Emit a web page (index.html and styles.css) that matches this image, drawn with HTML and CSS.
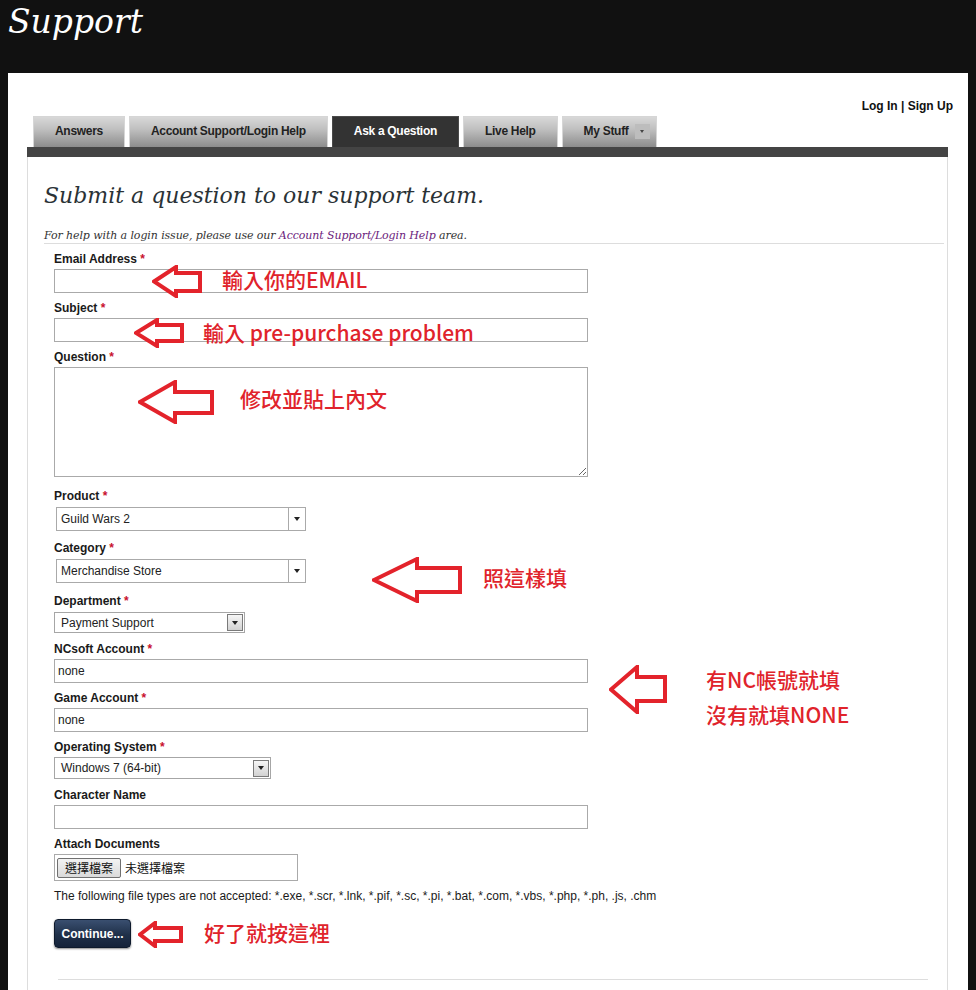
FILE: index.html
```html
<!DOCTYPE html>
<html lang="zh-Hant">
<head>
<meta charset="utf-8">
<title>Support</title>
<link rel="stylesheet" href="styles.css">
</head>
<body>
<div class="screen">
  <header class="masthead"><h1 class="brand">Support</h1></header>
  <div class="page">
    <div class="account">Log In | Sign Up</div>
    <nav class="tabs">
      <div class="tab">Answers</div>
      <div class="tab">Account Support/Login Help</div>
      <div class="tab active">Ask a Question</div>
      <div class="tab">Live Help</div>
      <div class="tab tab-menu">My Stuff <span class="menu-btn"><span class="tri"></span></span></div>
    </nav>
    <div class="bar"></div>
    <div class="panel">
      <h2 class="title">Submit a question to our support team.</h2>
      <p class="intro">For help with a login issue, please use our <a href="#">Account Support/Login Help</a> area.</p>
      <form class="form">
        <div class="group">
          <label class="label">Email Address <span class="req">*</span></label>
          <input class="text" type="text">
        </div>
        <div class="group">
          <label class="label">Subject <span class="req">*</span></label>
          <input class="text" type="text">
        </div>
        <div class="group g-area">
          <label class="label">Question <span class="req">*</span></label>
          <textarea class="text area"></textarea>
        </div>
        <div class="group g-sel">
          <label class="label">Product <span class="req">*</span></label>
          <div class="select"><span class="val">Guild Wars 2</span><span class="caret"><span class="tri"></span></span></div>
        </div>
        <div class="group g-sel2">
          <label class="label">Category <span class="req">*</span></label>
          <div class="select"><span class="val">Merchandise Store</span><span class="caret"><span class="tri"></span></span></div>
        </div>
        <div class="group g-dept">
          <label class="label">Department <span class="req">*</span></label>
          <div class="select classic dept"><span class="val">Payment Support</span><span class="btn"><span class="tri"></span></span></div>
        </div>
        <div class="group">
          <label class="label">NCsoft Account <span class="req">*</span></label>
          <input class="text" type="text" value="none">
        </div>
        <div class="group">
          <label class="label">Game Account <span class="req">*</span></label>
          <input class="text" type="text" value="none">
        </div>
        <div class="group g-os">
          <label class="label">Operating System <span class="req">*</span></label>
          <div class="select classic os"><span class="val">Windows 7 (64-bit)</span><span class="btn"><span class="tri"></span></span></div>
        </div>
        <div class="group">
          <label class="label">Character Name</label>
          <input class="text" type="text">
        </div>
        <div class="group">
          <label class="label">Attach Documents</label>
          <div class="file"><button type="button" class="file-btn">選擇檔案</button><span class="file-none">未選擇檔案</span></div>
        </div>
        <p class="note">The following file types are not accepted: *.exe, *.scr, *.lnk, *.pif, *.sc, *.pi, *.bat, *.com, *.vbs, *.php, *.ph, .js, .chm</p>
        <button type="button" class="continue">Continue...</button>
      </form>
      <div class="rule"></div>
    </div>
  </div>

  <div class="notes">
    <svg class="arrow a1" width="50" height="33" viewBox="0 0 50 33"><polygon points="2,16.5 24,2 24,8 48,8 48,26 24,26 24,31"/></svg>
    <div class="note-text t1">輸入你的EMAIL</div>
    <svg class="arrow a2" width="50" height="30" viewBox="0 0 50 30"><polygon points="2,15 23,2 23,7 48,7 48,23 23,23 23,28"/></svg>
    <div class="note-text t2">輸入 pre-purchase problem</div>
    <svg class="arrow a3" width="76" height="44" viewBox="0 0 76 44"><polygon points="2,22 37,2 37,12 74,12 74,33 37,33 37,42"/></svg>
    <div class="note-text t3">修改並貼上內文</div>
    <svg class="arrow a4" width="90" height="46" viewBox="0 0 90 46"><polygon points="2,23 45,2 45,11 88,11 88,35 45,35 45,44"/></svg>
    <div class="note-text t4">照這樣填</div>
    <svg class="arrow a5" width="58" height="49" viewBox="0 0 58 49"><polygon points="2,24.5 28,2 28,12 56,12 56,36 28,36 28,47"/></svg>
    <div class="note-text t5">有NC帳號就填<br>沒有就填NONE</div>
    <svg class="arrow a6" width="45" height="27" viewBox="0 0 45 27"><polygon points="2,13.5 17,2 17,7 43,7 43,20 17,20 17,25"/></svg>
    <div class="note-text t6">好了就按這裡</div>
  </div>
</div>
</body>
</html>
```
FILE: styles.css
```css
html, body {
  margin: 0;
  padding: 0;
  background: #111;
  font-family: "Liberation Sans", Arial, sans-serif;
}

.screen {
  position: relative;
  height: 990px;
  overflow: hidden;
}

.masthead {
  height: 73px;
  box-sizing: border-box;
  padding: 5px 0 0 8px;
}

.brand {
  margin: 0;
  font: italic normal 33px/1 "DejaVu Serif", serif;
  color: #fff;
}

.page {
  background: #fff;
  margin: 0 8px;
  padding-top: 26px;
  min-height: 917px;
  box-sizing: border-box;
}

.account {
  text-align: right;
  padding-right: 15px;
  font-size: 12px;
  font-weight: bold;
  line-height: 14px;
  color: #111;
}

.tabs {
  display: flex;
  gap: 4px;
  margin: 3px 0 0 25px;
}

.tab {
  height: 31px;
  box-sizing: border-box;
  padding: 0 21px 2px;
  border: 1px solid #d6d6d6;
  border-bottom: 0;
  background: linear-gradient(#d8d8d8, #c0c0c0 40%, #8c8c8c);
  font-size: 12px;
  font-weight: bold;
  letter-spacing: -0.3px;
  color: #222;
  display: flex;
  align-items: center;
}

.tab.active {
  background: #333;
  border-color: #4a4a4a;
  color: #fff;
}

.tab-menu {
  padding-right: 6px;
}

.menu-btn {
  width: 15px;
  height: 15px;
  margin-left: 6px;
  background: #bdbdbd;
  display: flex;
  align-items: center;
  justify-content: center;
}

.menu-btn .tri {
  width: 0;
  height: 0;
  border-left: 2.5px solid transparent;
  border-right: 2.5px solid transparent;
  border-top: 3px solid #444;
}

.bar {
  height: 10px;
  background: #444;
  margin: 0 20px 0 19px;
}

.panel {
  margin: 0 20px 0 19px;
  border-left: 1px solid #ddd;
  border-right: 1px solid #ddd;
  padding: 24px 3px 0 16px;
  height: 833px;
  box-sizing: border-box;
}

.title {
  margin: 0;
  font: italic normal 22px/30px "DejaVu Serif", serif;
  color: #2a3236;
}

.intro {
  margin: 17px 0 0;
  font: italic 11px/15px "DejaVu Serif", serif;
  letter-spacing: -0.1px;
  color: #333;
  border-bottom: 1px solid #ddd;
}

.intro a {
  color: #6b1c7c;
  text-decoration: none;
}

.form {
  padding: 8px 0 0 10px;
  margin: 0;
}

.group {
  margin-bottom: 8px;
}

.group.g-area {
  margin-bottom: 12px;
}

.group.g-sel {
  margin-bottom: 10px;
}

.group.g-sel2 {
  margin-bottom: 11px;
}

.group.g-dept {
  margin-bottom: 9px;
}

.group.g-os {
  margin-bottom: 9px;
}

.label {
  display: block;
  font-size: 12px;
  font-weight: bold;
  line-height: 14px;
  color: #1a1a1a;
  margin-bottom: 3px;
}

.req {
  color: #c8102e;
}

.text {
  display: block;
  width: 534px;
  height: 24px;
  box-sizing: border-box;
  border: 1px solid #aaa;
  margin: 0;
  padding: 0 3px;
  font: 12px "Liberation Sans", Arial, sans-serif;
  color: #222;
  background: #fff;
  outline: none;
}

.text.area {
  height: 110px;
  resize: both;
}

.select {
  display: flex;
  align-items: center;
  width: 250px;
  height: 24px;
  box-sizing: border-box;
  border: 1px solid #aaa;
  margin: 4px 0 0 2px;
  font-size: 12px;
  color: #222;
  background: #fff;
}

.select .val {
  flex: 1;
  padding-left: 4px;
}

.select .caret {
  width: 16px;
  align-self: stretch;
  border-left: 1px solid #aaa;
  display: flex;
  align-items: center;
  justify-content: center;
}

.select .tri {
  width: 0;
  height: 0;
  border-left: 3.5px solid transparent;
  border-right: 3.5px solid transparent;
  border-top: 4px solid #222;
}

.select.classic {
  height: 21px;
  margin-left: 0;
  border-color: #a6a6a6;
}

.select.classic .val {
  padding-left: 6px;
}

.select.dept {
  width: 191px;
}

.select.os {
  width: 217px;
  height: 22px;
  margin-top: 3px;
}

.select .btn {
  width: 16px;
  height: 17px;
  box-sizing: border-box;
  margin-right: 1px;
  border: 1px solid #7a7a7a;
  background: linear-gradient(#f6f6f6, #d2d2d2);
  display: flex;
  align-items: center;
  justify-content: center;
}

.file {
  width: 244px;
  height: 27px;
  box-sizing: border-box;
  border: 1px solid #aaa;
  display: flex;
  align-items: center;
  padding-left: 2px;
}

.file-btn {
  height: 20px;
  width: 64px;
  padding: 0;
  border: 1px solid #707070;
  border-radius: 2px;
  background: linear-gradient(#f3f3f3, #dadada);
  font: 12px/18px "Noto Sans CJK TC", sans-serif;
  color: #111;
}

.file-none {
  margin-left: 4px;
  font: 12px "Noto Sans CJK TC", sans-serif;
  color: #111;
}

.note {
  margin: 0;
  font-size: 12px;
  line-height: 14px;
  color: #1a1a1a;
}

.continue {
  margin-top: 16px;
  width: 77px;
  height: 29px;
  padding: 0;
  border: 1px solid #0e1a2c;
  border-radius: 4px;
  background: linear-gradient(#3a4f70, #1f3049 55%, #15233a);
  box-shadow: 0 1px 2px rgba(0, 0, 0, 0.45);
  color: #fff;
  font: bold 12px "Liberation Sans", Arial, sans-serif;
}

.rule {
  margin: 31px 16px 0 14px;
  border-top: 1px solid #ddd;
}

/* annotation overlay */
.notes {
  position: absolute;
  left: 0;
  top: 0;
}

.arrow {
  position: absolute;
  display: block;
}

.arrow polygon {
  fill: #fff;
  stroke: #e3232b;
  stroke-width: 4;
  stroke-linejoin: miter;
}

.a1 { left: 152px; top: 265px; }
.a2 { left: 134px; top: 318px; }
.a3 { left: 138px; top: 380px; }
.a4 { left: 372px; top: 557px; }
.a5 { left: 609px; top: 665px; }
.a6 { left: 138px; top: 921px; }

.note-text {
  position: absolute;
  font: 500 21px/1 "Noto Sans CJK TC", sans-serif;
  color: #e0232b;
  white-space: nowrap;
}

.t1 { left: 222px; top: 269px; }
.t2 { left: 203px; top: 322px; }
.t3 { left: 240px; top: 388px; }
.t4 { left: 483px; top: 567px; }
.t5 { left: 706px; top: 662px; line-height: 35px; }
.t6 { left: 204px; top: 922px; }
```
